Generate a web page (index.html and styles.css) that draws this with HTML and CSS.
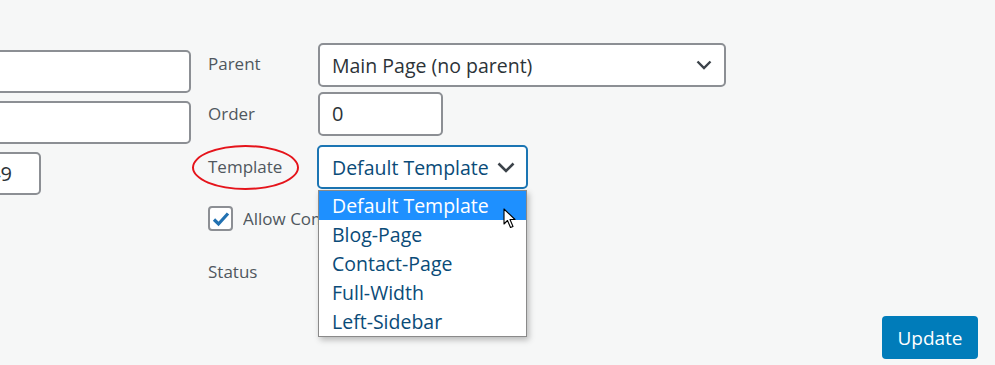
FILE: index.html
```html
<!DOCTYPE html>
<html lang="en">
<head>
   <meta charset="UTF-8">
   <meta name="viewport" content="width=device-width, initial-scale=1.0">
   <link rel="stylesheet" href="styles.css">
</head>
<body>
   <div class="page">
      <div class="fields-left">
         <div class="text-box wide"></div>
         <div class="text-box wide"></div>
         <div class="text-box short"><span class="clip-text">49</span></div>
      </div>
      <div class="attributes">
         <div class="row row-parent">
            <span class="label">Parent</span>
            <div class="select parent-select">
               <span>Main Page (no parent)</span>
               <svg class="chevron" width="16" height="10" viewBox="0 0 16 10"><path d="M1.5 1.5 L8 8 L14.5 1.5" fill="none" stroke="#3c434a" stroke-width="2.4"/></svg>
            </div>
         </div>
         <div class="row row-order">
            <span class="label">Order</span>
            <div class="text-box order-box">0</div>
         </div>
         <div class="row row-template">
            <span class="label template-label">Template<span class="circle"></span></span>
            <div class="template-wrap">
               <div class="select template-select">
                  <span>Default Template</span>
                  <svg class="chevron" width="18" height="11" viewBox="0 0 18 11"><path d="M1.5 1.5 L9 9 L16.5 1.5" fill="none" stroke="#3c434a" stroke-width="2.6"/></svg>
               </div>
               <ul class="dropdown">
                  <li class="active">Default Template</li>
                  <li>Blog-Page</li>
                  <li>Contact-Page</li>
                  <li>Full-Width</li>
                  <li>Left-Sidebar</li>
               </ul>
               <svg class="cursor" width="14" height="21" viewBox="0 0 14 21"><path d="M1 1 L1 16 L4.5 12.5 L7.5 19.5 L10 18.5 L7 11.5 L12 11.5 Z" fill="#fff" stroke="#000" stroke-width="1.1" stroke-linejoin="round"/></svg>
            </div>
         </div>
         <div class="row row-comments">
            <span class="checkbox">
               <svg width="18" height="16" viewBox="0 0 18 16"><path d="M2 8.5 L6.5 13 L16 2.5" fill="none" stroke="#2271b1" stroke-width="3.2"/></svg>
            </span>
            <span class="label comments-label">Allow Comments</span>
         </div>
         <div class="row row-status">
            <span class="label">Status</span>
         </div>
      </div>
   </div>
   <div class="footer">
      <button class="update-btn">Update</button>
   </div>
</body>
</html>
```

FILE: styles.css
```css
body {
   margin: 0;
   padding: 0;
   background-color: #f6f7f7;
   font-family: "Open Sans", "Noto Sans", sans-serif;
   color: #2c3338;
   overflow: hidden;
}
.page {
   display: flex;
   padding-top: 43px;
   height: 273px;
}
.fields-left {
   display: flex;
   flex-direction: column;
   gap: 8px;
   margin-left: -30px;
   padding-top: 7px;
   width: 221px;
}
.text-box {
   box-sizing: border-box;
   height: 43px;
   background: #fff;
   border: 2px solid #8c8f94;
   border-radius: 5px;
   font-size: 20px;
   line-height: 39px;
   padding-left: 12px;
}
.text-box.wide {
   width: 221px;
}
.text-box.short {
   width: 71px;
   position: relative;
   overflow: hidden;
}
.clip-text {
   position: absolute;
   right: 27px;
   top: 0;
}
.attributes {
   margin-left: 17px;
   display: flex;
   flex-direction: column;
}
.row {
   display: flex;
   align-items: center;
}
.label {
   width: 110px;
   font-size: 17px;
   color: #50575e;
   flex-shrink: 0;
}
.row-parent .label {
   margin-top: -4px;
}
.row-order .label {
   margin-top: -1px;
}
.select {
   box-sizing: border-box;
   height: 44px;
   background: #fff;
   border: 2px solid #8c8f94;
   border-radius: 5px;
   display: flex;
   align-items: center;
   justify-content: space-between;
   padding: 0 12px 0 12px;
   font-size: 19.5px;
}
.parent-select {
   width: 408px;
}
.row-order {
   margin-top: 5px;
}
.order-box {
   width: 125px;
   height: 44px;
   line-height: 40px;
}
.row-template {
   margin-top: 9px;
   align-items: flex-start;
}
.template-label {
   position: relative;
   line-height: 44px;
}
.circle {
   position: absolute;
   left: -16px;
   top: 0;
   width: 103px;
   height: 41px;
   border: 2px solid #e5141b;
   border-radius: 50%;
}
.template-wrap {
   position: relative;
   margin-left: -1px;
}
.template-select {
   width: 211px;
   border-color: #1b75b3;
   color: #0a4b78;
   padding: 0 11px 0 13px;
}
.dropdown {
   position: absolute;
   left: 1px;
   top: 45px;
   width: 209px;
   box-sizing: border-box;
   margin: 0;
   padding: 0;
   list-style: none;
   background: #fff;
   border: 1px solid #8a8a8a;
   box-shadow: 2px 3px 6px rgba(0, 0, 0, 0.25);
   z-index: 2;
}
.dropdown li {
   font-size: 19.5px;
   line-height: 29px;
   padding-left: 13px;
   color: #0a4b78;
}
.dropdown li.active {
   background: #1e90ff;
   color: #fff;
}
.cursor {
   position: absolute;
   left: 186px;
   top: 63px;
   z-index: 3;
}
.row-comments {
   margin-top: 17px;
}
.checkbox {
   box-sizing: border-box;
   width: 25px;
   height: 25px;
   border: 2px solid #8c8f94;
   border-radius: 4px;
   background: #fff;
   display: flex;
   align-items: center;
   justify-content: center;
   margin-right: 10px;
}
.comments-label {
   width: 75px;
   white-space: nowrap;
   overflow: hidden;
}
.row-status {
   margin-top: 29px;
}
.footer {
   display: flex;
   justify-content: flex-end;
   padding-right: 17px;
}
.update-btn {
   font-family: "Open Sans", "Noto Sans", sans-serif;
   font-size: 19px;
   color: #fff;
   background: #007cba;
   border: none;
   border-radius: 4px;
   width: 96px;
   height: 43px;
   cursor: pointer;
}
```
